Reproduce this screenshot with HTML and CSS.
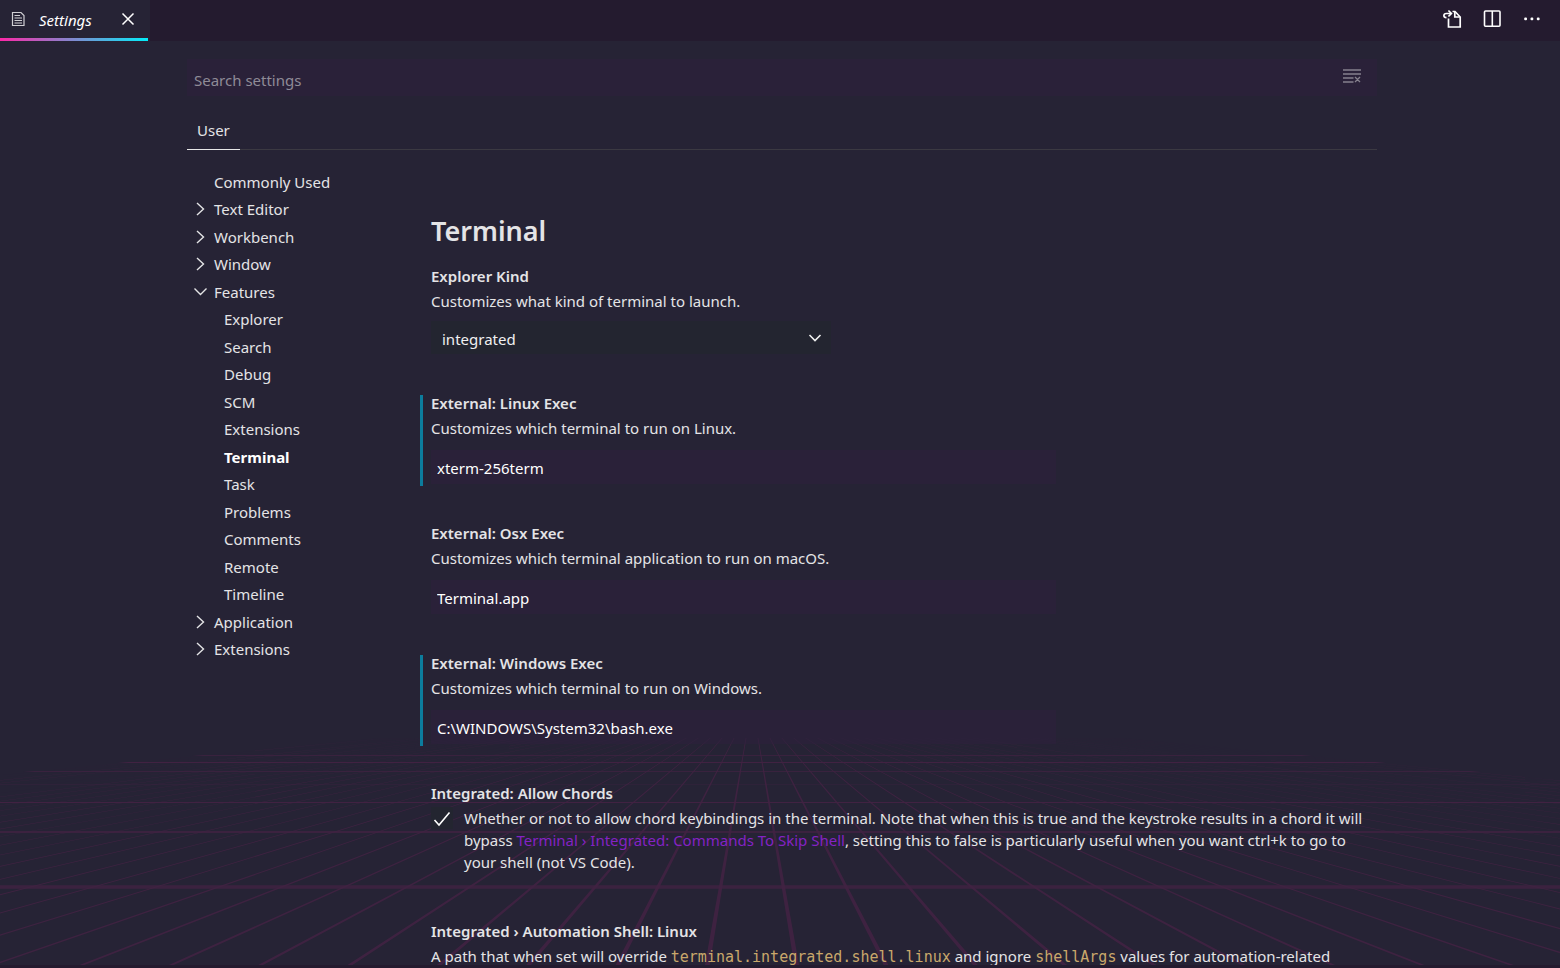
FILE: index.html
```html
<!DOCTYPE html>
<html lang="en">
<head>
<meta charset="utf-8">
<title>Settings</title>
<link rel="stylesheet" href="styles.css">
</head>
<body>
<div class="editor">
  <header class="tabbar">
    <div class="tab">
      <svg class="tab-icon" width="14" height="16" viewBox="0 0 14 16" fill="none" stroke="#d0cfd4" stroke-width="1.2"><path d="M1.500 1.500h8.500l3 3v10H1.500z"/><path d="M3.500 4.500h5.500M3.500 7h7.500M3.500 9.500h7.500M3.500 12h7.500"/></svg>
      <span class="tab-title">Settings</span>
      <button class="icon-button" aria-label="Close">
        <svg width="14" height="14" viewBox="0 0 14 14" fill="none" stroke="#fff" stroke-width="1.5"><path d="M1.500 1.500l11 11M12.500 1.500l-11 11"/></svg>
      </button>
    </div>
    <nav class="actions" aria-label="Editor actions">
      <button class="icon-button" aria-label="Open settings file">
        <svg width="20" height="20" viewBox="0 0 20 20" fill="none" stroke="#fff" stroke-width="1.7"><path d="M6.500 9.500v8.500h11.700V8L13 2.500h-2.500"/><path d="M12.800 3v5h5"/><path d="M4.500 8.600C1 8.600 1 4.500 4.500 4.500h4.500"/><path d="M6.400 1.500l3 3-3 3"/></svg>
      </button>
      <button class="icon-button" aria-label="Split editor">
        <svg width="20" height="20" viewBox="0 0 20 20" fill="none" stroke="#fff" stroke-width="1.6"><rect x="2.500" y="2" width="15.500" height="15.200" rx="1"/><path d="M10.300 2v15"/></svg>
      </button>
      <button class="icon-button" aria-label="More actions">
        <svg width="20" height="20" viewBox="0 0 20 20" fill="#fff"><rect x="2.200" y="8.500" width="2.800" height="2.800" rx="1"/><rect x="8.500" y="8.500" width="2.800" height="2.800" rx="1"/><rect x="14.800" y="8.500" width="2.800" height="2.800" rx="1"/></svg>
      </button>
    </nav>
  </header>

  <main class="pane">
    <svg class="floor" viewBox="0 0 1560 262" preserveAspectRatio="xMidYMax slice" aria-hidden="true">
      <defs>
        <clipPath id="floor-edge"><path d="M382 35H1122L3600 270H-2100Z"/></clipPath>
      </defs>
      <g id="floor-lines" clip-path="url(#floor-edge)"></g>
    </svg>
    <div class="settings">
      <div class="search">
        <input class="search-input" type="text" placeholder="Search settings" aria-label="Search settings">
        <button class="icon-button clear" aria-label="Clear search">
          <svg width="20" height="16" viewBox="0 0 20 16" fill="none" stroke="#85808d" stroke-width="1.3"><path d="M1 2h18M1 6h18M1 10h10.500M1 14h10.500M13 9l5 5M18 9l-5 5"/></svg>
        </button>
      </div>
      <div class="scopes"><button class="scope">User</button></div>
      <div class="columns">
        <nav aria-label="Settings groups">
          <ul class="toc">
            <li><a href="#">Commonly Used</a></li>
            <li><svg class="chev" viewBox="0 0 16 16"><path d="M5 2l6.500 6L5 14"/></svg><a href="#">Text Editor</a></li>
            <li><svg class="chev" viewBox="0 0 16 16"><path d="M5 2l6.500 6L5 14"/></svg><a href="#">Workbench</a></li>
            <li><svg class="chev" viewBox="0 0 16 16"><path d="M5 2l6.500 6L5 14"/></svg><a href="#">Window</a></li>
            <li><svg class="chev" viewBox="0 0 16 16"><path d="M2.500 4.500l6 6 6-6"/></svg><a href="#">Features</a></li>
            <li class="child"><a href="#">Explorer</a></li>
            <li class="child"><a href="#">Search</a></li>
            <li class="child"><a href="#">Debug</a></li>
            <li class="child"><a href="#">SCM</a></li>
            <li class="child"><a href="#">Extensions</a></li>
            <li class="child current"><a href="#terminal">Terminal</a></li>
            <li class="child"><a href="#">Task</a></li>
            <li class="child"><a href="#">Problems</a></li>
            <li class="child"><a href="#">Comments</a></li>
            <li class="child"><a href="#">Remote</a></li>
            <li class="child"><a href="#">Timeline</a></li>
            <li><svg class="chev" viewBox="0 0 16 16"><path d="M5 2l6.500 6L5 14"/></svg><a href="#">Application</a></li>
            <li><svg class="chev" viewBox="0 0 16 16"><path d="M5 2l6.500 6L5 14"/></svg><a href="#">Extensions</a></li>
          </ul>
        </nav>
        <section class="list" id="terminal">
          <h1 class="group-title">Terminal</h1>
          <div class="item">
            <label class="item-title" for="kind">Explorer Kind</label>
            <p class="desc">Customizes what kind of terminal to launch.</p>
            <div class="select-wrap">
              <select class="select" id="kind"><option>integrated</option><option>external</option></select>
              <svg class="select-arrow" width="14" height="14" viewBox="0 0 14 14" fill="none" stroke="#f0f0f0" stroke-width="1.6"><path d="M1.500 4L7 9.500 12.500 4"/></svg>
            </div>
          </div>
          <div class="item modified">
            <label class="item-title" for="linux">External: Linux Exec</label>
            <p class="desc">Customizes which terminal to run on Linux.</p>
            <input class="text-input" id="linux" type="text" value="xterm-256term">
          </div>
          <div class="item">
            <label class="item-title" for="osx">External: Osx Exec</label>
            <p class="desc">Customizes which terminal application to run on macOS.</p>
            <input class="text-input" id="osx" type="text" value="Terminal.app">
          </div>
          <div class="item modified">
            <label class="item-title" for="windows">External: Windows Exec</label>
            <p class="desc">Customizes which terminal to run on Windows.</p>
            <input class="text-input" id="windows" type="text" value="C:\WINDOWS\System32\bash.exe">
          </div>
          <div class="item">
            <label class="item-title" for="chords">Integrated: Allow Chords</label>
            <div class="check-row">
              <span class="check-wrap">
                <input class="check" id="chords" type="checkbox" checked>
                <svg class="check-mark" viewBox="0 0 22 22"><path d="M3.500 13l4.500 5L18.500 5.500"/></svg>
              </span>
              <p class="desc">Whether or not to allow chord keybindings in the terminal. Note that when this is true and the keystroke results in a chord it will bypass <a class="link" href="#">Terminal › Integrated: Commands To Skip Shell</a>, setting this to false is particularly useful when you want ctrl+k to go to your shell (not VS Code).</p>
            </div>
          </div>
          <div class="item">
            <h2 class="item-title">Integrated › Automation Shell: Linux</h2>
            <p class="desc">A path that when set will override <code>terminal.integrated.shell.linux</code> and ignore <code>shellArgs</code> values for automation-related</p>
          </div>
        </section>
      </div>
    </div>
  </main>
  <div class="panel-edge"></div>
</div>
<script src="floor.js"></script>
</body>
</html>
```
FILE: styles.css
```css
* { box-sizing: border-box; }

body {
  margin: 0;
  background: #262335;
  color: #e4e4e6;
  font: 15px/22px "Noto Sans", "Open Sans", sans-serif;
}

button, input, select { font: inherit; color: inherit; border: 0; }

a { color: inherit; text-decoration: none; }

.editor {
  display: flex;
  flex-direction: column;
  height: 100vh;
  overflow: hidden;
}

.tabbar {
  display: flex;
  justify-content: space-between;
  flex: none;
  height: 41px;
  background: #241b2f;
}

.tab {
  display: flex;
  align-items: center;
  min-width: 150px;
  padding: 0 15px 3px 11px;
  background: linear-gradient(90deg, #fc28a8, #03edf9) 0 100% / calc(100% - 2px) 3px no-repeat #262335;
}

.tab-title {
  flex: 1;
  margin: 2px 24px 0 14px;
  color: #fff;
  font-style: italic;
}

.icon-button {
  display: flex;
  padding: 0;
  background: none;
}

.actions {
  display: flex;
  align-items: center;
  gap: 20px;
  padding: 0 18px 3px 0;
}

.pane {
  position: relative;
  flex: 1;
  min-height: 0;
  overflow: hidden;
}

.floor {
  position: absolute;
  left: 0;
  bottom: 0;
  width: 100%;
  height: 262px;
  fill: #ff1fa0;
  opacity: 0.12;
}

.panel-edge {
  flex: none;
  height: 3px;
  background: #241b2f;
}

.settings {
  position: relative;
  max-width: 1200px;
  margin: 0 auto;
  padding: 18px 3px 0 7px;
}

.search {
  display: flex;
  align-items: center;
  height: 37px;
  padding: 0 15px 0 7px;
  background: rgba(46, 31, 61, 0.5);
}

.search-input {
  flex: 1;
  padding: 4px 0 0;
  background: none;
  outline: 0;
}

.search-input::placeholder { color: #8f8b97; opacity: 1; }

.clear { padding-bottom: 3px; }

.scopes {
  display: flex;
  height: 54px;
  padding-top: 14px;
  border-bottom: 1px solid #3b3942;
}

.scope {
  margin-bottom: -1px;
  padding: 0 10px;
  background: none;
  border-bottom: 1px solid #e7e7e7;
}

.columns {
  display: grid;
  grid-template-columns: 233px minmax(0, 1fr);
  padding-top: 18px;
}

.toc {
  display: grid;
  grid-auto-rows: 27px 28px;
  align-items: center;
  margin: 0;
  padding: 0;
  list-style: none;
}

.toc li {
  display: grid;
  grid-template-columns: 16px 1fr;
  align-items: center;
  column-gap: 6px;
  padding-left: 5px;
}

.toc a { grid-column: 2; }

.toc .child { padding-left: 15px; }

.current { color: #fff; font-weight: 700; }

.chev {
  width: 16px;
  height: 16px;
  fill: none;
  stroke: #e4e4e6;
  stroke-width: 1.4;
}

.list {
  margin-right: -12px;
  padding-top: 43px;
}

.group-title {
  margin: 0 0 17px 11px;
  font-size: 27px;
  font-weight: 600;
  line-height: 40px;
}

.item {
  margin-bottom: 39px;
  padding: 0 8px 2px;
  border-left: 3px solid transparent;
}

.modified { border-left-color: #0c7d9d; }

.item-title {
  display: block;
  margin: 0 0 6px;
  font-size: 15px;
  font-weight: 600;
  line-height: 16px;
}

.desc { margin: 0; }

.text-input {
  display: block;
  width: 100%;
  max-width: 625px;
  height: 34px;
  margin-top: 11px;
  padding: 1px 6px 0;
  background: rgba(46, 31, 61, 0.5);
  color: #fff;
}

.select-wrap {
  display: flex;
  position: relative;
  max-width: 400px;
  margin-top: 9px;
}

.select {
  flex: 1;
  height: 33px;
  padding: 3px 11px 0;
  appearance: none;
  background: #232530;
  color: #f0f0f0;
}

.select-arrow {
  position: absolute;
  top: 10px;
  right: 9px;
  pointer-events: none;
}

.check-row {
  display: flex;
  gap: 11px;
  padding-bottom: 9px;
}

.check-wrap {
  display: grid;
  flex: none;
  width: 22px;
  height: 22px;
}

.check, .check-mark { grid-area: 1 / 1; }

.check {
  width: 22px;
  height: 22px;
  margin: 0;
  appearance: none;
  background: #232530;
}

.check-mark {
  visibility: hidden;
  fill: none;
  stroke: #fff;
  stroke-width: 1.6;
  pointer-events: none;
}

.check:checked + .check-mark { visibility: visible; }

.link { color: #8422c4; }

code {
  color: #c9a86b;
  font: 15px/18px "DejaVu Sans Mono", "Liberation Mono", monospace;
}
```
FILE: floor.js
```js
// Perspective grid: rays leave the vanishing point, rows recede toward it.
const lines = document.getElementById("floor-lines");
const centerX = 752, depth = 262, spread = 0.341;

function polygon(points, opacity) {
  const shape = document.createElementNS("http://www.w3.org/2000/svg", "polygon");
  shape.setAttribute("points", points);
  shape.setAttribute("opacity", opacity);
  lines.append(shape);
}

for (let k = -31.5; k <= 31.5; k++) {
  const x = centerX + k * spread * depth;
  const half = 2.4;
  polygon(`${centerX},0 ${x - half},${depth} ${x + half},${depth}`, 0.9);
}

// Each row: top edge, thickness, strength.
const rows = [[52, 1, 0.7], [59, 1, 1], [68, 1, 0.7], [81, 1, 0.3], [99, 1, 1], [128, 2, 0.8], [182, 4, 0.6], [183, 2, 0.5]];
for (const [y, h, strength] of rows) {
  polygon(`-600,${y} 2200,${y} 2200,${y + h} -600,${y + h}`, strength);
}
```
